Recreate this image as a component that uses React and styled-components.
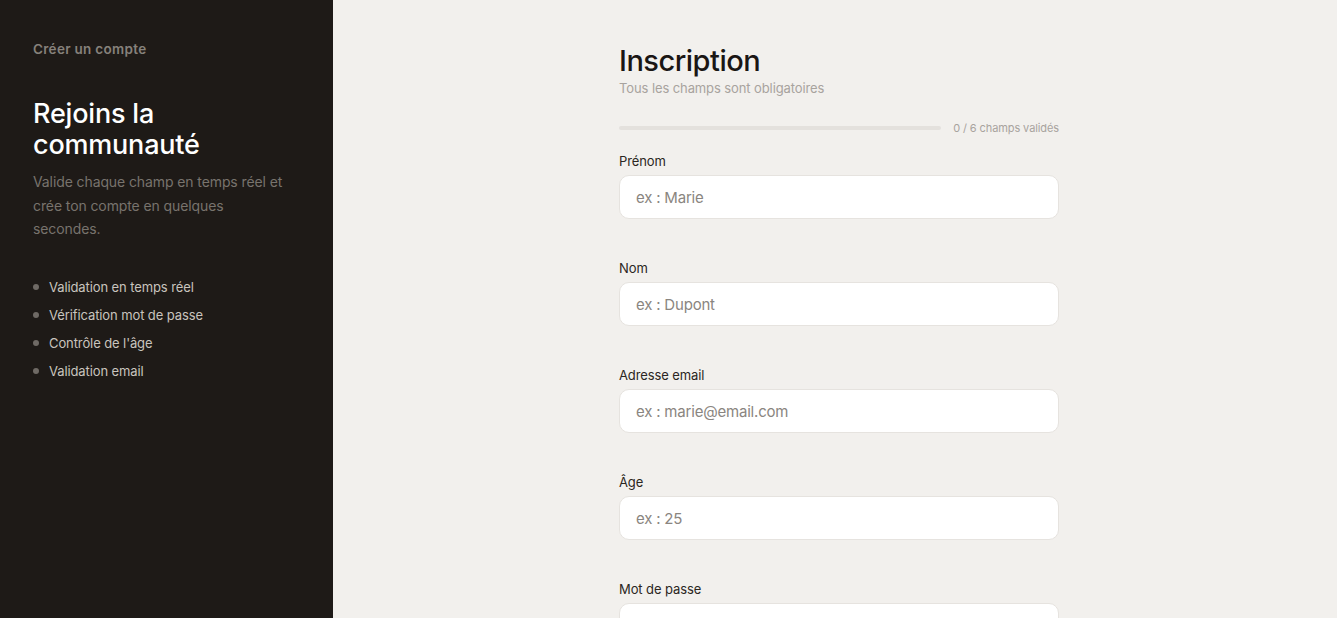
import React from "react";
import styled, { createGlobalStyle } from "styled-components";

const GlobalStyle = createGlobalStyle`
  html, body {
    margin: 0;
    padding: 0;
    height: 100%;
    overflow: hidden;
  }
  body {
    font-family: "Inter", "Liberation Sans", sans-serif;
    background: #f2f0ed;
  }
  #root {
    height: 100%;
  }
  * {
    box-sizing: border-box;
  }
`;

const Page = styled.div`
  display: flex;
  height: 618px;
`;

const Aside = styled.aside`
  width: 333px;
  flex-shrink: 0;
  background: #1e1a17;
  padding: 41px 33px;
  display: flex;
  flex-direction: column;
`;

const Kicker = styled.div`
  font-size: 13.5px;
  font-weight: 600;
  color: #86817b;
  letter-spacing: 0.3px;
`;

const AsideTitle = styled.h1`
  margin: 41px 0 0;
  font-size: 27px;
  line-height: 31px;
  font-weight: 500;
  color: #ffffff;
  letter-spacing: -0.2px;
`;

const AsideText = styled.p`
  margin: 10px 0 0;
  font-size: 14px;
  line-height: 23.5px;
  color: #78736d;
  font-weight: 400;
  letter-spacing: -0.1px;
  max-width: 256px;
`;

const Perks = styled.ul`
  list-style: none;
  margin: 37px 0 0;
  padding: 0;
  display: flex;
  flex-direction: column;
  gap: 10px;
  > li {
    display: flex;
    align-items: center;
    gap: 10px;
    font-size: 13px;
    line-height: 18px;
    color: #c9c4be;
    letter-spacing: -0.1px;
  }
  > li::before {
    content: "";
    width: 6px;
    height: 6px;
    border-radius: 50%;
    background: #6f6a65;
  }
`;

const Main = styled.main`
  flex: 1;
  display: flex;
  justify-content: center;
  padding: 43px 0 0 8px;
`;

const Form = styled.form`
  width: 440px;
  display: flex;
  flex-direction: column;
`;

const Title = styled.h2`
  margin: 0;
  font-size: 29px;
  line-height: 36px;
  font-weight: 500;
  color: #1a1614;
  letter-spacing: -0.5px;
`;

const Subtitle = styled.div`
  font-size: 13px;
  line-height: 18px;
  color: #a8a39e;
  letter-spacing: -0.1px;
`;

const ProgressRow = styled.div`
  display: flex;
  align-items: center;
  gap: 12px;
  margin-top: 24px;
  margin-bottom: 17px;
`;

const Track = styled.div`
  flex: 1;
  height: 4px;
  border-radius: 2px;
  background: #e4e1dd;
`;

const ProgressLabel = styled.span`
  font-size: 11px;
  color: #a8a39e;
  letter-spacing: -0.1px;
`;

const Field = styled.div`
  display: flex;
  flex-direction: column;
  gap: 5px;
  margin-bottom: 40px;
`;

const Label = styled.label`
  font-size: 13px;
  line-height: 18px;
  color: #2b2622;
  letter-spacing: -0.1px;
`;

const Input = styled.input`
  height: 44px;
  border: 1px solid #e6e3df;
  border-radius: 10px;
  background: #ffffff;
  padding: 0 16px;
  font-family: inherit;
  font-size: 15px;
  color: #1a1614;
  letter-spacing: -0.2px;
  outline: none;
  &::placeholder {
    color: #8a8580;
  }
`;

const fields = [
  { label: "Prénom", placeholder: "ex : Marie", type: "text" },
  { label: "Nom", placeholder: "ex : Dupont", type: "text" },
  { label: "Adresse email", placeholder: "ex : marie@email.com", type: "email" },
  { label: "Âge", placeholder: "ex : 25", type: "text" },
  { label: "Mot de passe", placeholder: "", type: "password" },
];

export default function App() {
  return (
    <>
      <GlobalStyle />
      <Page>
        <Aside>
          <Kicker>Créer un compte</Kicker>
          <AsideTitle>
            Rejoins la
            <br />
            communauté
          </AsideTitle>
          <AsideText>
            Valide chaque champ en temps réel et crée ton compte en quelques
            secondes.
          </AsideText>
          <Perks>
            <li>Validation en temps réel</li>
            <li>Vérification mot de passe</li>
            <li>Contrôle de l'âge</li>
            <li>Validation email</li>
          </Perks>
        </Aside>
        <Main>
          <Form onSubmit={(e) => e.preventDefault()}>
            <Title>Inscription</Title>
            <Subtitle>Tous les champs sont obligatoires</Subtitle>
            <ProgressRow>
              <Track />
              <ProgressLabel>0 / 6 champs validés</ProgressLabel>
            </ProgressRow>
            {fields.map((f) => (
              <Field key={f.label}>
                <Label>{f.label}</Label>
                <Input type={f.type} placeholder={f.placeholder} />
              </Field>
            ))}
          </Form>
        </Main>
      </Page>
    </>
  );
}
